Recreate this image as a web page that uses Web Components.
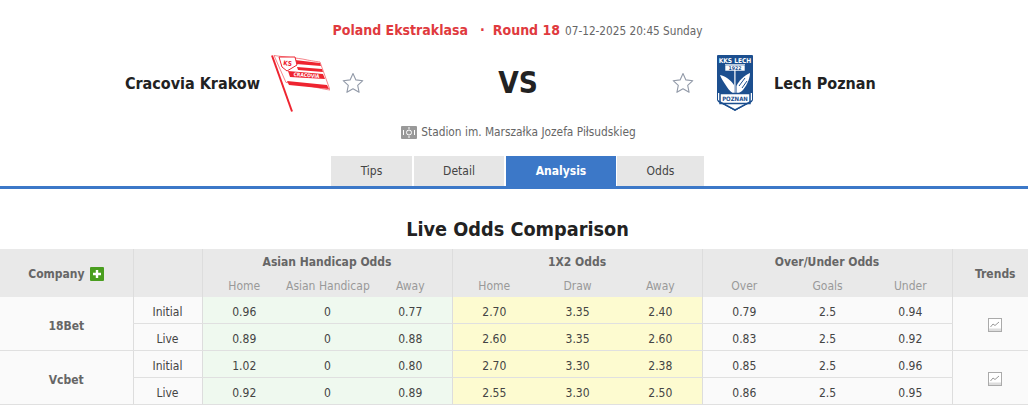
<!DOCTYPE html>
<html>
<head>
<meta charset="utf-8">
<title>Cracovia Krakow vs Lech Poznan</title>
<style>
  html, body { margin: 0; padding: 0; background: #fff; }
  body { font: 12px "DejaVu Sans", sans-serif; font-stretch: condensed; color: #333; overflow: hidden; }
</style>
</head>
<body>
<match-header></match-header>
<tab-bar active="Analysis"></tab-bar>
<odds-table></odds-table>

<script>
const STAR = `<svg width="22" height="22" viewBox="0 0 22 22"><path d="M11 1.500l2.900 6.400 6.900.8-5.100 4.700 1.400 6.900-6.100-3.500-6.100 3.500 1.400-6.900L1.200 8.700l6.900-.8z" fill="#fff" stroke="#929aa8" stroke-width="1.100" stroke-linejoin="round"/></svg>`;

const CRACOVIA = `<svg width="60" height="58" viewBox="0 0 60 58">
  <path d="M2 1.500L22 57.500" stroke="#ee2430" stroke-width="2" fill="none"/>
  <path d="M4 1.500C14 3 28 4 35 5.500S46 7.500 50 8l10 28c-8-1-14-3-24-4.500S24 29 16 28.500z" fill="#fff" stroke="#f0525a" stroke-width=".7"/>
  <path d="M25 6l25 3 1 3-25-2zM27 13l25 2 1 3-25-2zM17 27l40 4 2 4-40-4z" fill="#ee2430"/>
  <path d="M9 3h16l2 8-10 6-5-4z" fill="#fff" stroke="#ee2430"/>
  <text x="17.500" y="11.500" font-size="6.500" font-weight="700" fill="#ee2430" text-anchor="middle" transform="rotate(8 17 11)">KS</text>
  <path d="M18 17l35 3 2 5-35-2z" fill="#ee2430"/>
  <text x="36.500" y="23" font-size="5" font-weight="700" fill="#fff" text-anchor="middle" transform="rotate(5 36 22)">CRACOVIA</text>
</svg>`;

const LECH = `<svg width="36" height="56" viewBox="0 0 36 56">
  <path d="M.5 .5h35v45L18 55.500 .5 45.500z" fill="#fff" stroke="#1c4f8f"/>
  <rect x="1" y="1" width="34" height="8" fill="#1c4f8f"/>
  <text x="18" y="7.500" font-size="6.600" font-weight="700" fill="#fff" text-anchor="middle">KKS LECH</text>
  <path d="M1 9h7v6h20V9h7v29H1z" fill="#1c4f8f"/>
  <rect x="8" y="10" width="20" height="6" fill="#fff" stroke="#1c4f8f" stroke-width=".6"/>
  <text x="18" y="15.200" font-size="5.200" font-weight="700" fill="#1c4f8f" text-anchor="middle">1922</text>
  <path d="M3 20c5 1 11 5 14 10v8h-1.500c-3-2-5-5-7.500-9-2-3-4-6-5-9z" fill="#fff"/>
  <path d="M33 18c0 6-4 14-8 18l-3 2h-2.500v-7c2-5 8-11 13.500-13z" fill="#fff"/>
  <path d="M28 23l-6 8M30 26l-5 7" stroke="#1c4f8f" stroke-width="1"/>
  <path d="M17.900 15v23" stroke="#fff" stroke-width="1.200"/>
  <rect x="3" y="38.500" width="30" height="10" fill="#fff" stroke="#1c4f8f" stroke-width="1.500"/>
  <text x="18" y="46" font-size="6" font-weight="700" fill="#1c4f8f" text-anchor="middle">POZNAN</text>
  <path d="M1 46l17 9 17-9" fill="none" stroke="#1c4f8f" stroke-width="1.500"/>
</svg>`;

class MatchHeader extends HTMLElement {
  connectedCallback() {
    this.attachShadow({ mode: 'open' });
    this.shadowRoot.innerHTML = `
      <style>
        :host { display: block; height: 156px; color: #333; }
        .league { display: flex; justify-content: center; align-items: baseline; padding-top: 22px; height: 18px; margin-left: 7px; }
        .league b { font-size: 14px; color: #e03a3e; }
        .league i { font-style: normal; font-weight: 700; font-size: 14px; color: #e03a3e; margin: 0 8px 0 12px; }
        .league span { font-size: 11.700px; color: #666; margin-left: 5px; }
        .teams { display: grid; grid-template-columns: 364px 308px 1fr; align-items: center; height: 58px; margin-top: 14px; }
        .side { display: flex; align-items: center; }
        .home { justify-content: flex-end; }
        .name { font-size: 16px; font-weight: 700; color: #222; }
        .logo { display: flex; justify-content: center; width: 60px; }
        .home .logo { margin: 0 12px 0 10px; }
        .away .logo { margin: 0 9px 0 11px; }
        .star { display: flex; }
        .vs { text-align: center; font-size: 29.500px; font-weight: 700; color: #222; }
        .venue { display: flex; justify-content: center; align-items: center; gap: 4px; margin-top: 13px; color: #666; font-size: 11.800px; padding-left: 9px; }
      </style>
      <div class="league"><b>Poland Ekstraklasa</b><i>·</i><b>Round 18</b><span>07-12-2025 20:45 Sunday</span></div>
      <div class="teams">
        <div class="side home"><div class="name">Cracovia Krakow</div><div class="logo">${CRACOVIA}</div><div class="star">${STAR}</div></div>
        <div class="vs">VS</div>
        <div class="side away"><div class="star">${STAR}</div><div class="logo">${LECH}</div><div class="name">Lech Poznan</div></div>
      </div>
      <div class="venue">
        <svg width="16" height="13" viewBox="0 0 16 13"><rect width="16" height="13" rx="1" fill="#999"/><circle cx="8" cy="6.500" r="2.500" fill="none" stroke="#fff"/><path d="M8 1v2M8 10v2M2.500 4v5M13.500 4v5" stroke="#fff"/></svg>
        <span>Stadion im. Marszałka Jozefa Piłsudskieg</span>
      </div>`;
  }
}
customElements.define('match-header', MatchHeader);

class TabBar extends HTMLElement {
  connectedCallback() {
    this.attachShadow({ mode: 'open' });
    const tabs = [['Tips', 81], ['Detail', 90], ['Analysis', 110], ['Odds', 87]];
    const active = this.getAttribute('active');
    this.shadowRoot.innerHTML = `
      <style>
        :host { display: flex; height: 30px; padding-left: 331px; border-bottom: 3px solid #3c78c8; color: #444; }
        a { display: flex; align-items: center; justify-content: center; margin-right: 2px; background: #e6e6e6; }
        a.on { background: #3c78c8; color: #fff; font-weight: 700; margin-right: 1px; }
      </style>
      ${tabs.map(([t, w]) => `<a class="${t === active ? 'on' : ''}" style="width:${w}px">${t}</a>`).join('')}`;
  }
}
customElements.define('tab-bar', TabBar);

class OddsTable extends HTMLElement {
  connectedCallback() {
    this.attachShadow({ mode: 'open' });
    const data = [
      ['18Bet', [
        ['Initial', '0.96', '0', '0.77', '2.70', '3.35', '2.40', '0.79', '2.5', '0.94'],
        ['Live', '0.89', '0', '0.88', '2.60', '3.35', '2.60', '0.83', '2.5', '0.92']]],
      ['Vcbet', [
        ['Initial', '1.02', '0', '0.80', '2.70', '3.30', '2.38', '0.85', '2.5', '0.96'],
        ['Live', '0.92', '0', '0.89', '2.55', '3.30', '2.50', '0.86', '2.5', '0.95']]]
    ];
    const chart = `<svg width="14" height="14" viewBox="0 0 14 14"><rect x=".5" y=".5" width="13" height="13" fill="#fff" stroke="#aaa"/><rect x="1" y="10.500" width="12" height="2.500" fill="#ddd"/><path d="M2.500 9l2.500-3 2 1.500 4-3.500" fill="none" stroke="#999"/></svg>`;
    const cls = i => i < 3 ? 'ah' : i < 6 ? 'x12' : 'ou';
    const rows = data.map(([name, lines]) => lines.map((l, n) => `
      <tr>
        ${n ? '' : `<td rowspan="2" class="co">${name}</td>`}
        <td class="ty">${l[0]}</td>
        ${l.slice(1).map((v, i) => `<td class="${cls(i)}${i % 3 === 0 ? ' first' : ''}">${v}</td>`).join('')}
        ${n ? '' : `<td rowspan="2" class="tr">${chart}</td>`}
      </tr>`).join('')).join('');
    this.shadowRoot.innerHTML = `
      <style>
        :host { display: block; margin-top: 29px; width: 1028px; overflow: hidden; }
        h2 { margin: 0 0 7px; height: 24px; line-height: 24px; font-size: 19.700px; text-align: center; color: #222; padding-left: 7px; }
        table { border-collapse: collapse; table-layout: fixed; width: 1038px; font-size: 12px; color: #444; text-align: center; white-space: nowrap; }
        th, td { padding: 0; }
        thead th { background: #e9e9e9; color: #666; padding-top: 2px; }
        thead tr:first-child th { height: 21px; }
        thead tr:last-child th { height: 23px; color: #999; font-weight: 400; }
        th.v, td.ty, td.first, td.tr { border-left: 1px solid #ddd; }
        .plus { display: inline-block; vertical-align: -3px; width: 14px; height: 14px; margin-left: 2px; border-radius: 1px; background: #4a9e1f; }
        tbody td { height: 22px; padding-top: 4px; border-bottom: 1px solid #e0e0e0; background: #fafafa; }
        td.co { font-weight: 700; color: #666; }
        td.ah { background: #eff9ef; }
        td.x12 { background: #fdfbd0; }
        tbody td.tr { padding-top: 2px; }
        td.tr svg { display: block; margin: 0 auto; }
      </style>
      <h2>Live Odds Comparison</h2>
      <table>
        <colgroup><col style="width:133px"><col style="width:69px">
          <col style="width:84px"><col style="width:83px"><col style="width:83px">
          <col style="width:84px"><col style="width:83px"><col style="width:83px">
          <col style="width:84px"><col style="width:83px"><col style="width:83px"><col></colgroup>
        <thead>
          <tr>
            <th rowspan="2" class="co">Company <svg class="plus" viewBox="0 0 14 14"><path d="M7 3v8M3 7h8" stroke="#fff" stroke-width="2.400"/></svg></th>
            <th rowspan="2" class="v"></th>
            <th colspan="3" class="v">Asian Handicap Odds</th>
            <th colspan="3" class="v">1X2 Odds</th>
            <th colspan="3" class="v">Over/Under Odds</th>
            <th rowspan="2" class="v">Trends</th>
          </tr>
          <tr>
            <th class="v">Home</th><th>Asian Handicap</th><th>Away</th>
            <th class="v">Home</th><th>Draw</th><th>Away</th>
            <th class="v">Over</th><th>Goals</th><th>Under</th>
          </tr>
        </thead>
        <tbody>${rows}</tbody>
      </table>`;
  }
}
customElements.define('odds-table', OddsTable);
</script>
</body>
</html>
